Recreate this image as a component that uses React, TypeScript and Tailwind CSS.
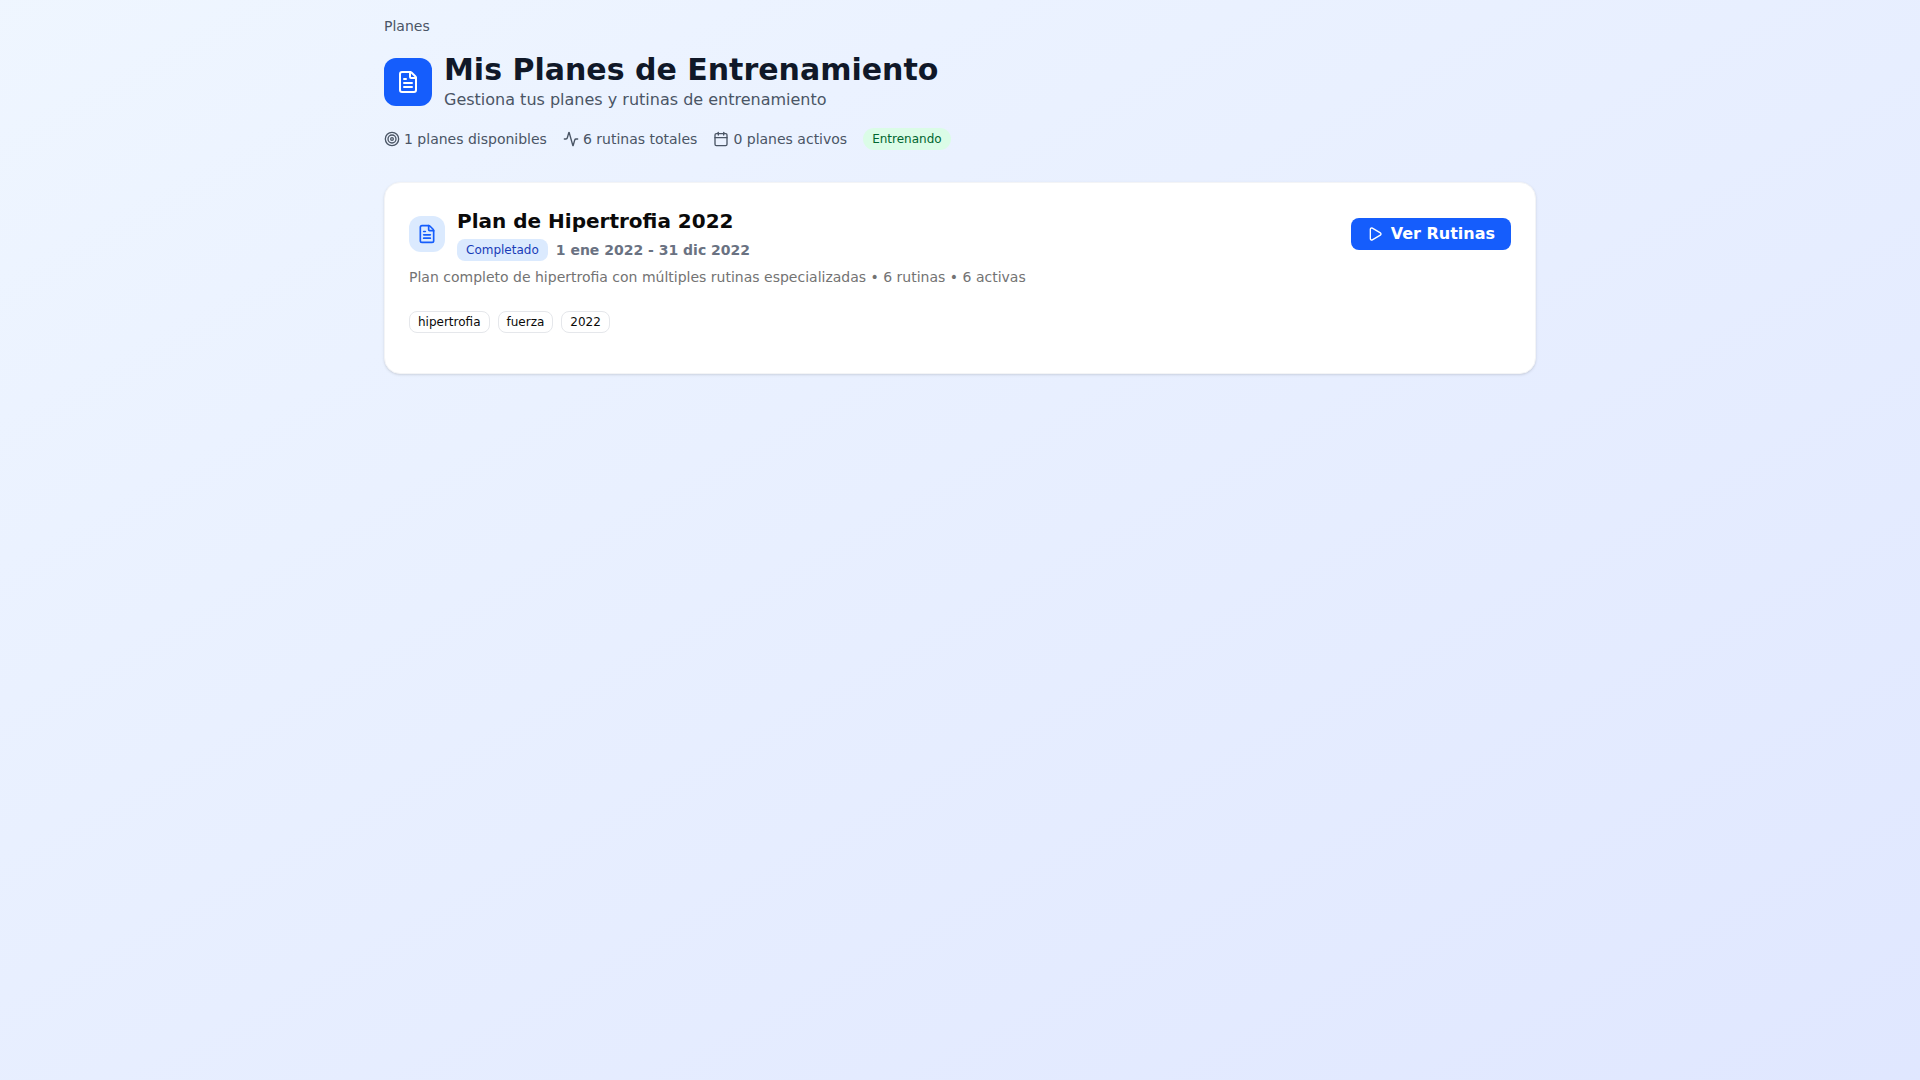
import { Activity, Calendar, FileText, Play, Target } from "lucide-react";

const stats = [
  { icon: Target, label: "1 planes disponibles" },
  { icon: Activity, label: "6 rutinas totales" },
  { icon: Calendar, label: "0 planes activos" },
];

const tags = ["hipertrofia", "fuerza", "2022"];

export default function App() {
  return (
    <div className="min-h-screen bg-gradient-to-br from-blue-50 to-indigo-100 font-['DejaVu_Sans',sans-serif] antialiased">
      <div className="mx-auto max-w-6xl py-4">
        <div className="mb-4 text-sm leading-5 text-gray-600">Planes</div>
        <div className="mb-4 flex items-center gap-3">
          <div className="flex h-12 w-12 items-center justify-center rounded-xl bg-blue-600 text-white">
            <FileText className="h-6 w-6" />
          </div>
          <div>
            <h1 className="text-3xl font-bold text-gray-900">Mis Planes de Entrenamiento</h1>
            <p className="text-base text-gray-600">Gestiona tus planes y rutinas de entrenamiento</p>
          </div>
        </div>
        <div className="mb-8 flex items-center gap-4 text-sm text-gray-600">
          {stats.map(({ icon: Icon, label }) => (
            <div key={label} className="flex items-center gap-1">
              <Icon className="h-4 w-4" />
              <span>{label}</span>
            </div>
          ))}
          <span className="rounded-full border border-transparent bg-green-100 px-2 py-0.5 text-xs text-green-800">Entrenando</span>
        </div>
        <div className="rounded-2xl border border-gray-100 bg-white p-6 shadow-sm">
          <div className="flex items-center justify-between">
            <div className="flex items-center gap-3">
              <div className="flex h-9 w-9 items-center justify-center rounded-xl bg-blue-100 text-blue-600">
                <FileText className="h-5 w-5" />
              </div>
              <div>
                <h2 className="text-xl font-bold leading-7 text-neutral-950">Plan de Hipertrofia 2022</h2>
                <div className="mt-1 flex items-center gap-2">
                  <span className="rounded-lg border border-transparent bg-blue-100 px-2 py-0.5 text-xs text-blue-800">Completado</span>
                  <span className="text-sm font-bold text-gray-500">1 ene 2022 - 31 dic 2022</span>
                </div>
              </div>
            </div>
            <button className="flex h-8 items-center gap-2 rounded-lg bg-blue-600 px-4 text-base font-bold text-white">
              <Play className="h-4 w-4" />
              Ver Rutinas
            </button>
          </div>
          <p className="mt-1.5 text-sm text-neutral-500">
            Plan completo de hipertrofia con múltiples rutinas especializadas • 6 rutinas • 6 activas
          </p>
          <div className="mb-4 mt-6 flex gap-2">
            {tags.map((t) => (
              <span key={t} className="rounded-lg border border-gray-200 bg-white px-2 py-0.5 text-xs text-neutral-950">
                {t}
              </span>
            ))}
          </div>
        </div>
      </div>
    </div>
  );
}
